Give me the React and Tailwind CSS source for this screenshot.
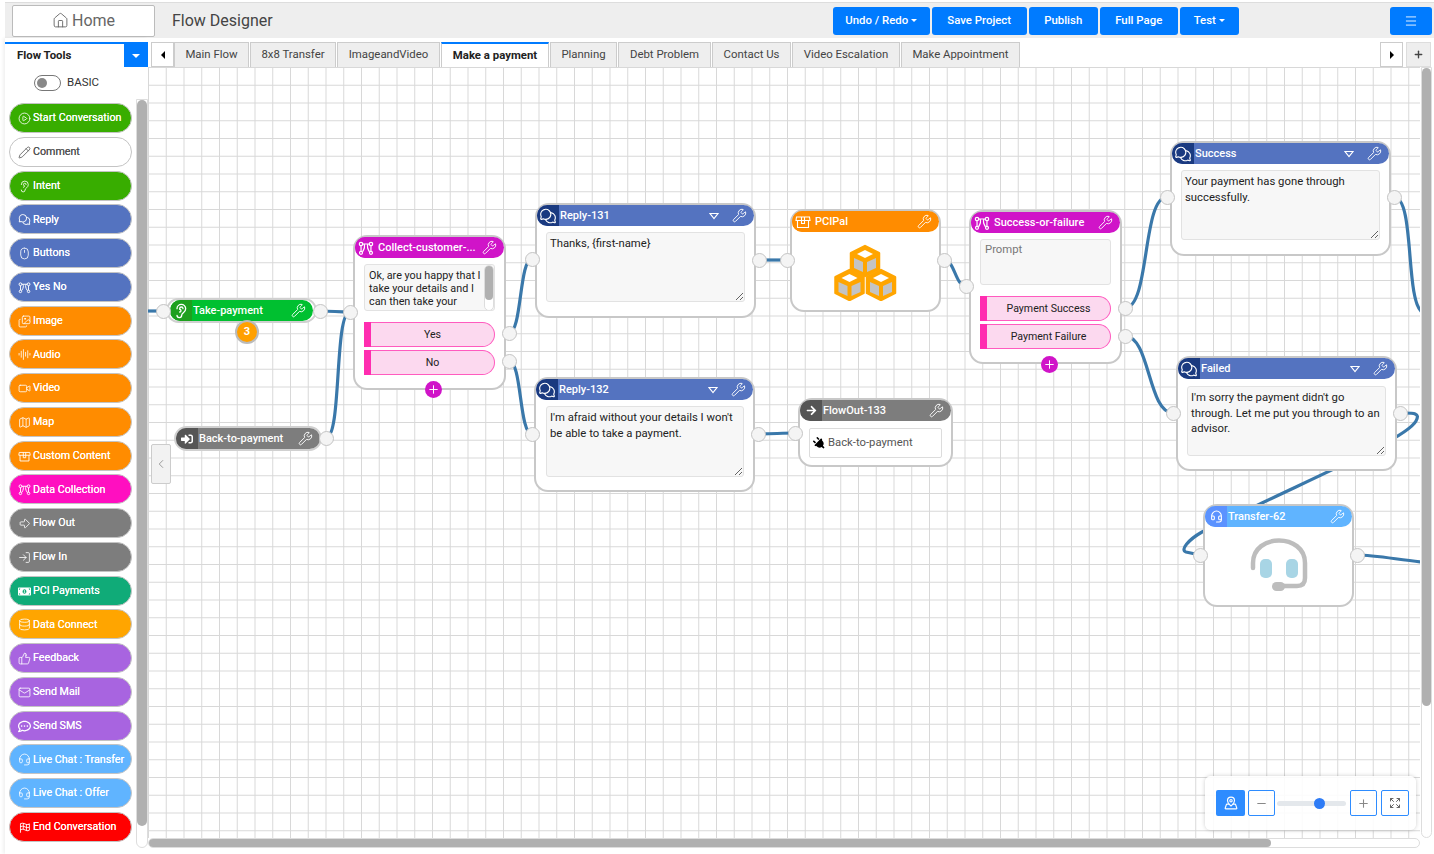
import React from 'react';
import {
  Home, CirclePlay, Pencil, Ear, Mouse, Images, AudioLines, Video, Map as MapIcon,
  ArrowBigRight, LogIn, Database, ThumbsUp, Mail, Headset, Wrench, ChevronLeft, Plus, Minus,
  Menu, Expand, MapPinned,
} from 'lucide-react';
import { PiChatsCircle, PiFlagCheckered } from 'react-icons/pi';
import { FaMoneyBillAlt, FaRegCommentDots, FaPlug, FaArrowRight, FaSignInAlt } from 'react-icons/fa';

// the branching icon used by Yes No and Data Collection
function Branches({ className }) {
  return (
    <svg viewBox="0 0 16 14" fill="none" stroke="currentColor" strokeWidth="1.2" className={className}>
      <circle cx="3" cy="3" r="1.7" />
      <circle cx="13" cy="3" r="1.7" />
      <circle cx="3" cy="11.8" r="1.5" />
      <circle cx="13" cy="11.8" r="1.5" />
      <path d="M4.7 3 H11.3 M3 4.7 C3 7 3.2 8 3 10.3 M13 4.7 C13 7 12.8 8 13 10.3 M6 3 C7 5 7 7 4.5 10.8 M10 3 C9 5 9 7 11.5 10.8" />
    </svg>
  );
}

function OpenBox({ className }) {
  return (
    <svg viewBox="0 0 16 14" fill="none" stroke="currentColor" strokeWidth="1.1" className={className}>
      <path d="M1.5 2 H14.5 L15 5.5 H1 Z" />
      <path d="M2.5 5.5 V12.5 H13.5 V5.5" />
      <path d="M6.5 2 V8.5 H9.5 V2" />
    </svg>
  );
}

const tools = [
  { label: 'Start Conversation', bg: 'bg-[#38ad00] text-white', Icon: CirclePlay },
  { label: 'Comment', bg: 'bg-white text-[#555]', Icon: Pencil },
  { label: 'Intent', bg: 'bg-[#38ad00] text-white', Icon: Ear },
  { label: 'Reply', bg: 'bg-[#5473c0] text-white', Icon: PiChatsCircle },
  { label: 'Buttons', bg: 'bg-[#5473c0] text-white', Icon: Mouse },
  { label: 'Yes No', bg: 'bg-[#5473c0] text-white', Icon: Branches },
  { label: 'Image', bg: 'bg-[#ff8c00] text-white', Icon: Images },
  { label: 'Audio', bg: 'bg-[#ff8c00] text-white', Icon: AudioLines },
  { label: 'Video', bg: 'bg-[#ff8c00] text-white', Icon: Video },
  { label: 'Map', bg: 'bg-[#ff8c00] text-white', Icon: MapIcon },
  { label: 'Custom Content', bg: 'bg-[#ff8c00] text-white', Icon: OpenBox },
  { label: 'Data Collection', bg: 'bg-[#ff0fc0] text-white', Icon: Branches },
  { label: 'Flow Out', bg: 'bg-[#7d7d7d] text-white', Icon: ArrowBigRight },
  { label: 'Flow In', bg: 'bg-[#7d7d7d] text-white', Icon: LogIn },
  { label: 'PCI Payments', bg: 'bg-[#10ab78] text-white', Icon: FaMoneyBillAlt },
  { label: 'Data Connect', bg: 'bg-[#ffa500] text-white', Icon: Database },
  { label: 'Feedback', bg: 'bg-[#a864e0] text-white', Icon: ThumbsUp },
  { label: 'Send Mail', bg: 'bg-[#a864e0] text-white', Icon: Mail },
  { label: 'Send SMS', bg: 'bg-[#a864e0] text-white', Icon: FaRegCommentDots },
  { label: 'Live Chat : Transfer', bg: 'bg-[#60b4ff] text-white', Icon: Headset },
  { label: 'Live Chat : Offer', bg: 'bg-[#60b4ff] text-white', Icon: Headset },
  { label: 'End Conversation', bg: 'bg-[#ff0000] text-white', Icon: PiFlagCheckered },
];

const tabs = [
  { label: 'Main Flow', w: 'w-[75px]' },
  { label: '8x8 Transfer', w: 'w-[86px]' },
  { label: 'ImageandVideo', w: 'w-[103px]' },
  { label: 'Make a payment', w: 'w-[108px]', active: true },
  { label: 'Planning', w: 'w-[67px]' },
  { label: 'Debt Problem', w: 'w-[93px]' },
  { label: 'Contact Us', w: 'w-[79px]' },
  { label: 'Video Escalation', w: 'w-[108px]' },
  { label: 'Make Appointment', w: 'w-[119px]' },
];

const headerButtons = [
  { label: 'Undo / Redo', w: 'w-[97px]', caret: true },
  { label: 'Save Project', w: 'w-[95px]' },
  { label: 'Publish', w: 'w-[69px]' },
  { label: 'Full Page', w: 'w-[78px]' },
  { label: 'Test', w: 'w-[59px]', caret: true },
];

// page coordinates of the connection dots
const ports = [
  [163, 311], [320, 311], [326, 438], [350, 312], [509, 333], [509, 361],
  [532, 259], [759, 260], [532, 434], [758, 434], [787, 260], [944, 260],
  [795, 433], [966, 286], [1125, 308], [1125, 336], [1167, 197], [1394, 197],
  [1173, 413], [1400, 413], [1200, 555], [1357, 555],
];

const edges = [
  'M148 311 L163 311',
  'M320 311 C332 311 338 312 350 312',
  'M326 438 C342 438 334 312 350 312',
  'M509 333 C522 333 519 259 532 259',
  'M509 361 C522 361 519 434 532 434',
  'M759 260 L787 260',
  'M944 260 C955 260 955 286 966 286',
  'M1125 308 C1150 308 1142 197 1167 197',
  'M1125 336 C1150 336 1148 413 1173 413',
  'M1394 197 C1415 197 1405 300 1422 312',
  'M758 434 C772 434 782 433 795 433',
  'M1400 413 C1412 413 1421 412 1416 421 C1408 436 1340 466 1262 503 L1202 532 C1188 540 1180 550 1186 552 L1200 555',
  'M1357 555 C1375 555 1400 560 1422 562',
];

function NodeHeader({ title, main, dark, Icon, caret, iconClass = 'h-[16px] w-[16px]' }) {
  return (
    <div className={`flex h-[21px] items-center overflow-hidden rounded-full text-[11px] font-medium text-white ${main}`}>
      <div className={`flex h-full w-[22px] shrink-0 items-center justify-center ${dark}`}>
        <Icon className={iconClass} />
      </div>
      <span className="ml-px flex-1 truncate pt-px">{title}</span>
      {caret && (
        <svg viewBox="0 0 10 8" className="mr-[13px] h-[8px] w-[10px]" fill="none" stroke="white" strokeWidth="1.2">
          <path d="M1 1.5 H9 L5 6.5 Z" />
        </svg>
      )}
      <Wrench className="mr-[7px] h-[15px] w-[15px] shrink-0" strokeWidth={1.5} />
    </div>
  );
}

function MessageBox({ text, className }) {
  return (
    <textarea
      readOnly
      defaultValue={text}
      className={`block rounded-[3px] border border-[#e2e2e2] bg-[#f7f7f7] px-[3px] py-[3px] text-[11.3px] leading-[15.5px] text-[#222] outline-none ${className}`}
    />
  );
}

function Choice({ label }) {
  return (
    <div className="flex h-[25px] w-[131px]">
      <div className="w-[7px] bg-[#ff2db0]" />
      <div className="flex flex-1 items-center justify-center rounded-r-full border border-l-0 border-[#ff5bbf] bg-[#fcd9ef] pt-px text-[10.6px] text-[#222]">
        {label}
      </div>
    </div>
  );
}

function AddButton({ className }) {
  return (
    <div className={`absolute flex h-[17px] w-[17px] items-center justify-center rounded-full bg-[#d014c8] text-white ${className}`}>
      <Plus className="h-[13px] w-[13px]" strokeWidth={1.8} />
    </div>
  );
}

function Cubes() {
  const cubes = [[32, 17], [16.5, 41], [48, 41]];
  const pts = (list) => list.map((p) => p.join(',')).join(' ');
  return (
    <svg viewBox="0 0 65 57" className="h-[57px] w-[65px]">
      {cubes.map(([x, y]) => (
        <g key={x}>
          <polygon
            points={pts([[x, y - 15], [x + 14, y - 8], [x + 14, y + 8], [x, y + 15], [x - 14, y + 8], [x - 14, y - 8]])}
            fill="#ffa500" stroke="#ffa500" strokeWidth="2.5" strokeLinejoin="round"
          />
          <polygon points={pts([[x, y - 11], [x + 8, y - 7], [x, y - 3], [x - 8, y - 7]])} fill="#fff" />
          <polygon points={pts([[x - 11, y - 3], [x - 2, y + 1], [x - 2, y + 11], [x - 11, y + 7]])} fill="#c4c4c4" />
          <polygon points={pts([[x + 11, y - 3], [x + 2, y + 1], [x + 2, y + 11], [x + 11, y + 7]])} fill="#c4c4c4" />
        </g>
      ))}
    </svg>
  );
}

function BigHeadset() {
  return (
    <svg viewBox="0 0 58 58" className="h-[58px] w-[58px]">
      <path d="M3 32 V27 C3 -3 55 -3 55 27 V42 C55 48 52 50 47 50 H28" fill="none" stroke="#bdbdbd" strokeWidth="4.5" strokeLinecap="round" />
      <rect x="10" y="23" width="12" height="19" rx="5" fill="#a8d5e5" />
      <rect x="36" y="23" width="12" height="19" rx="5" fill="#a8d5e5" />
      <rect x="22" y="46" width="13" height="9" rx="4.5" fill="#bdbdbd" />
    </svg>
  );
}

const nodeShell = 'absolute rounded-[14px] border-2 border-[#c8c8c8] bg-white';
const chatIcon = 'h-[18px] w-[18px]';

function Canvas() {
  return (
    <div className="relative h-[771px] w-[1272px] overflow-hidden bg-white bg-[linear-gradient(#d8d8d8_1px,transparent_1px),linear-gradient(90deg,#d8d8d8_1px,transparent_1px)] bg-[size:17.75px_17.75px]">
      <svg viewBox="148 67 1272 771" className="absolute inset-0 h-full w-full">
        {edges.map((d) => (
          <path key={d} d={d} fill="none" stroke="#3a78aa" strokeWidth="3.2" />
        ))}
      </svg>

      {/* Take-payment */}
      <div className="absolute left-[18px] top-[231px] w-[151px] rounded-full border-2 border-[#d0d0d0] bg-white px-[2px]">
        <NodeHeader title="Take-payment" main="bg-[#00c030]" dark="bg-[#1ea01e]" Icon={Ear} />
      </div>
      <div className="absolute left-[87px] top-[253px] flex h-[24px] w-[24px] items-center justify-center rounded-full border-2 border-[#bbb] bg-[#ffa000] text-[11px] font-bold text-white">3</div>

      {/* Back-to-payment */}
      <div className="absolute left-[26px] top-[359px] w-[148px] rounded-full border-2 border-[#d0d0d0] bg-white">
        <NodeHeader title="Back-to-payment" main="bg-[#7d7d7d]" dark="bg-[#555]" Icon={FaSignInAlt} iconClass="h-[12px] w-[12px]" />
      </div>

      {/* Collect-customer */}
      <div className={`${nodeShell} left-[205px] top-[168px] h-[155px] w-[153px]`}>
        <NodeHeader title="Collect-customer-..." main="bg-[#d014c8]" dark="bg-[#d014c8]" Icon={Branches} />
        <div className="mx-[9px] mt-[6px] flex h-[47px] overflow-hidden rounded-[3px] border border-[#e2e2e2] bg-[#f7f7f7] pl-[4px] pt-[4px]">
          <p className="w-[115px] shrink-0 text-[10.8px] leading-[13px] text-[#222]">Ok, are you happy that I take your details and I can then take your payment?</p>
          <div className="mt-[-4px] h-[46px] w-[11px] rounded-full border border-[#ddd] bg-white">
            <div className="h-[34px] rounded-full bg-[#b0b0b0]" />
          </div>
        </div>
        <div className="mx-[9px] mt-[11px] flex flex-col gap-[3px]">
          <Choice label="Yes" />
          <Choice label="No" />
        </div>
      </div>
      <AddButton className="left-[277px] top-[314px]" />

      {/* Reply-131 */}
      <div className={`${nodeShell} left-[387px] top-[136px] h-[115px] w-[221px]`}>
        <NodeHeader title="Reply-131" main="bg-[#5473c0]" dark="bg-[#1a3a80]" Icon={PiChatsCircle} iconClass={chatIcon} caret />
        <MessageBox text="Thanks, {first-name}" className="mx-[9px] mt-[6px] h-[70px] w-[199px]" />
      </div>

      {/* Reply-132 */}
      <div className={`${nodeShell} left-[386px] top-[310px] h-[115px] w-[221px]`}>
        <NodeHeader title="Reply-132" main="bg-[#5473c0]" dark="bg-[#1a3a80]" Icon={PiChatsCircle} iconClass={chatIcon} caret />
        <MessageBox text="I'm afraid without your details I won't be able to take a payment." className="mx-[10px] mt-[6px] h-[71px] w-[198px]" />
      </div>

      {/* PCIPal */}
      <div className={`${nodeShell} left-[642px] top-[142px] h-[103px] w-[151px]`}>
        <NodeHeader title="PCIPal" main="bg-[#ff8c00]" dark="bg-[#ff8c00]" Icon={OpenBox} />
        <div className="mt-[12px] flex justify-center"><Cubes /></div>
      </div>

      {/* FlowOut-133 */}
      <div className={`${nodeShell} left-[650px] top-[331px] h-[69px] w-[155px]`}>
        <NodeHeader title="FlowOut-133" main="bg-[#7d7d7d]" dark="bg-[#555]" Icon={FaArrowRight} iconClass="h-[11px] w-[11px]" />
        <div className="mx-[9px] mt-[7px] flex h-[30px] items-center gap-[2px] rounded-[2px] border border-[#dcdcdc] bg-white pl-[3px] text-[11.3px] text-[#555]">
          <FaPlug className="h-[13px] w-[13px] -rotate-45 text-black" />
          Back-to-payment
        </div>
      </div>

      {/* Success-or-failure */}
      <div className={`${nodeShell} left-[821px] top-[143px] h-[154px] w-[153px]`}>
        <NodeHeader title="Success-or-failure" main="bg-[#d014c8]" dark="bg-[#d014c8]" Icon={Branches} />
        <div className="mx-[9px] mt-[6px] h-[46px] w-[131px] rounded-[3px] border border-[#e2e2e2] bg-[#f7f7f7] px-[4px] py-[2px] text-[11.3px] text-[#777]">Prompt</div>
        <div className="mx-[9px] mt-[11px] flex flex-col gap-[3px]">
          <Choice label="Payment Success" />
          <Choice label="Payment Failure" />
        </div>
      </div>
      <AddButton className="left-[893px] top-[289px]" />

      {/* Success */}
      <div className={`${nodeShell} left-[1022px] top-[74px] h-[115px] w-[221px]`}>
        <NodeHeader title="Success" main="bg-[#5473c0]" dark="bg-[#1a3a80]" Icon={PiChatsCircle} iconClass={chatIcon} caret />
        <MessageBox text="Your payment has gone through successfully." className="mx-[9px] mt-[6px] h-[70px] w-[199px]" />
      </div>

      {/* Failed */}
      <div className={`${nodeShell} left-[1028px] top-[289px] h-[115px] w-[221px]`}>
        <NodeHeader title="Failed" main="bg-[#5473c0]" dark="bg-[#1a3a80]" Icon={PiChatsCircle} iconClass={chatIcon} caret />
        <MessageBox text="I'm sorry the payment didn't go through. Let me put you through to an advisor." className="mx-[9px] mt-[7px] h-[70px] w-[199px]" />
      </div>

      {/* Transfer-62 */}
      <div className={`${nodeShell} left-[1055px] top-[437px] h-[103px] w-[151px]`}>
        <NodeHeader title="Transfer-62" main="bg-[#60b4ff]" dark="bg-[#5b92ff]" Icon={Headset} iconClass="h-[13px] w-[13px]" />
        <div className="mt-[9px] flex justify-center"><BigHeadset /></div>
      </div>

      {ports.map(([x, y]) => (
        <div
          key={`${x}-${y}`}
          className="absolute h-[15px] w-[15px] rounded-full border border-[#c4c4c4] bg-[#f4f4f4]"
          style={{ left: x - 148 - 7.5, top: y - 67 - 7.5 }}
        />
      ))}

      {/* collapse handle */}
      <div className="absolute left-[3px] top-[377px] flex h-[40px] w-[20px] items-center justify-center rounded-[2px] border border-[#ccc] bg-[#f2f2f2] text-[#888]">
        <ChevronLeft className="h-[14px] w-[14px]" strokeWidth={1.4} />
      </div>

      {/* zoom panel */}
      <div className="absolute left-[1057px] top-[709px] flex h-[54px] w-[211px] items-center rounded-[6px] bg-white/90 pl-[11px] shadow-[0_0_4px_rgba(0,0,0,0.2)]">
        <button className="flex h-[26px] w-[29px] items-center justify-center rounded-[2px] bg-[#2e8cff] text-white">
          <MapPinned className="h-[14px] w-[14px]" />
        </button>
        <button className="ml-[3px] flex h-[26px] w-[27px] items-center justify-center rounded-[2px] border border-[#2e8cff] text-[#888]">
          <Minus className="h-[13px] w-[13px]" />
        </button>
        <div className="relative mx-[2px] h-[5px] w-[69px] rounded-full bg-[#e4e8ec]">
          <div className="absolute left-[37px] top-[-3px] h-[11px] w-[11px] rounded-full bg-[#2e7cf6]" />
        </div>
        <button className="ml-[2px] flex h-[26px] w-[27px] items-center justify-center rounded-[2px] border border-[#2e8cff] text-[#888]">
          <Plus className="h-[13px] w-[13px]" />
        </button>
        <button className="ml-[4px] flex h-[26px] w-[28px] items-center justify-center rounded-[2px] border border-[#2e8cff] text-[#666]">
          <Expand className="h-[12px] w-[12px]" />
        </button>
      </div>
    </div>
  );
}

export default function App() {
  return (
    <div className="h-[854px] w-[1434px] overflow-hidden bg-white pt-[2px] [font-family:Roboto,sans-serif]">
      {/* top bar */}
      <header className="ml-[5px] flex h-[36px] items-center border-t border-[#ddd] bg-[#eeeeee]">
        <button className="ml-[7px] flex h-[32px] w-[143px] items-center justify-center gap-[3px] rounded-[2px] border border-[#bbb] bg-white text-[16px] text-[#666]">
          <Home className="h-[17px] w-[17px]" strokeWidth={1.3} />
          Home
        </button>
        <h1 className="ml-[17px] text-[16px] text-[#444]">Flow Designer</h1>
        <div className="ml-[560px] flex gap-[2px]">
          {headerButtons.map((b) => (
            <button key={b.label} className={`flex h-[28px] items-center justify-center gap-[3px] rounded-[3px] bg-[#007bff] text-[11.4px] font-medium text-white ${b.w}`}>
              {b.label}
              {b.caret && <span className="h-0 w-0 border-x-[3px] border-t-[3px] border-x-transparent border-t-white" />}
            </button>
          ))}
        </div>
        <button className="ml-[151px] flex h-[28px] w-[42px] items-center justify-center rounded-[3px] bg-[#007bff] text-white">
          <Menu className="h-[14px] w-[14px]" strokeWidth={1.5} />
        </button>
      </header>

      <div className="flex h-[816px]">
        {/* tools sidebar */}
        <aside className="ml-[5px] w-[143px] shrink-0 pt-[4px] shadow-[-2px_0_3px_rgba(0,0,0,0.06)]">
          <div className="flex h-[25px] border-t-2 border-[#007bff] bg-white">
            <div className="flex flex-1 items-center pl-[12px] text-[11.4px] font-bold text-[#222]">Flow Tools</div>
            <div className="flex w-[24px] items-center justify-center bg-[#007bff]">
              <span className="h-0 w-0 border-x-[4px] border-t-[4px] border-x-transparent border-t-white" />
            </div>
          </div>
          <div className="mt-[8px] flex h-[16px] items-center pl-[29px]">
            <div className="flex h-[16px] w-[27px] items-center rounded-full border border-[#777] bg-white pl-[2px]">
              <div className="h-[10px] w-[10px] rounded-full bg-[#888]" />
            </div>
            <span className="ml-[6px] text-[11.5px] text-[#333]">BASIC</span>
          </div>
          <div className="mt-[8px] flex">
            <div className="ml-[4px] mt-[4px] flex w-[123px] flex-col gap-[3.75px]">
              {tools.map(({ label, bg, Icon }) => (
                <div key={label} className={`flex h-[30px] items-center gap-[2px] whitespace-nowrap rounded-full border border-[#c4c4c4] pl-[8px] pt-px text-[10.7px] [text-shadow:0_0_0.6px_currentColor] ${bg}`}>
                  <Icon className="h-[13px] w-[13px] shrink-0" strokeWidth={1.5} />
                  {label}
                </div>
              ))}
            </div>
            <div className="ml-[4px] h-[749px] w-[12px] rounded-b-full border border-[#ddd] bg-white">
              <div className="h-[726px] rounded-full bg-[#b0b0b0]" />
            </div>
          </div>
        </aside>

        <main className="w-[1286px]">
          {/* tabs */}
          <div className="flex h-[29px] items-end">
            <button className="ml-[3px] flex h-[25px] w-[23px] items-center justify-center border border-[#ccc] bg-white">
              <span className="h-0 w-0 border-y-[4px] border-r-[4px] border-y-transparent border-r-black" />
            </button>
            {tabs.map((t) => (
              <div
                key={t.label}
                className={`mr-px flex h-[25px] items-center justify-center border border-b-0 text-[11.4px] ${t.w} ${t.active ? 'border-[#ccc] border-t-2 border-t-[#007bff] bg-white font-bold text-[#222]' : 'border-[#ccc] bg-[#eeeeee] text-[#444]'}`}
              >
                {t.label}
              </div>
            ))}
            <button className="ml-[359px] flex h-[25px] w-[23px] items-center justify-center border border-[#ccc] bg-white">
              <span className="h-0 w-0 border-y-[4px] border-l-[4px] border-y-transparent border-l-black" />
            </button>
            <button className="ml-[3px] flex h-[25px] w-[25px] items-center justify-center border border-[#ddd] bg-[#eeeeee] text-[#444]">
              <Plus className="h-[11px] w-[11px]" strokeWidth={3} />
            </button>
          </div>

          <div className="flex">
            <Canvas />
            <div className="ml-px h-[771px] w-[11px] rounded-b-full border border-[#ddd] bg-white">
              <div className="h-[638px] rounded-full bg-[#b0b0b0]" />
            </div>
          </div>
          <div className="h-[10px] w-[1272px] rounded-full border border-[#ddd] bg-white">
            <div className="h-full w-[1122px] rounded-full bg-[#b0b0b0]" />
          </div>
        </main>
      </div>
    </div>
  );
}
